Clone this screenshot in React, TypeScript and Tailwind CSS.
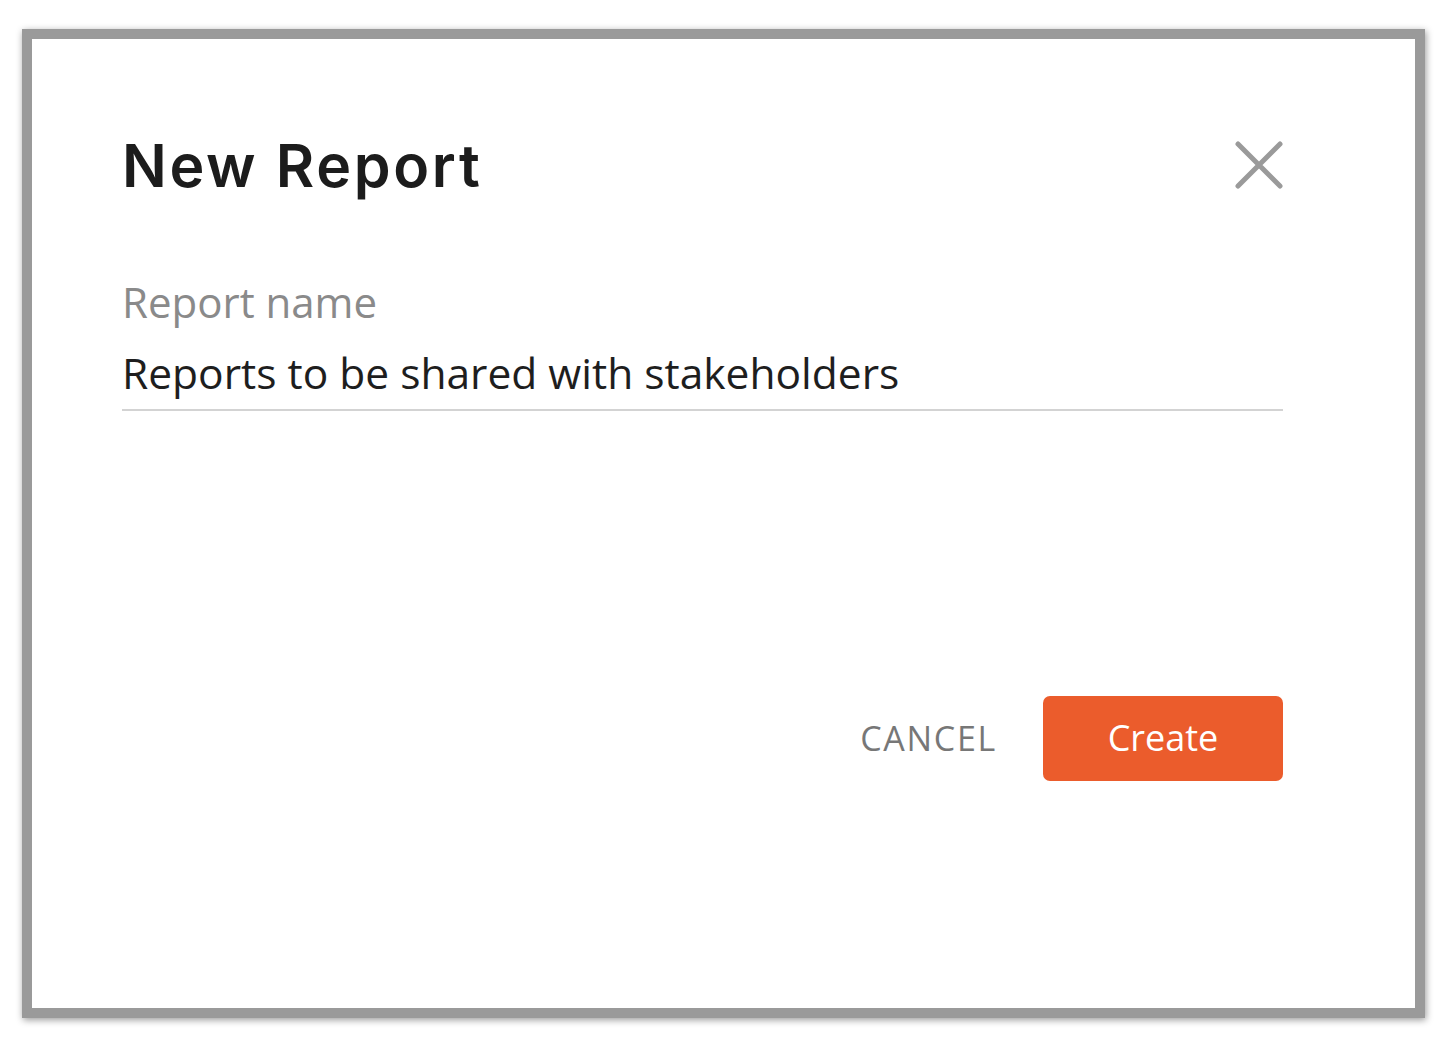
import React from 'react';

const CloseIcon: React.FC = () => (
  <svg width="50" height="50" viewBox="0 0 50 50" fill="none">
    <path d="M4 4 L46 46 M46 4 L4 46" stroke="#9a9a9a" strokeWidth="5" strokeLinecap="round" />
  </svg>
);

export default function App() {
  return (
    <div className="w-[1442px] h-[1042px] bg-white pt-[29px] pl-[22px]">
      <div className="w-[1403px] h-[989px] border-[10px] border-[#9a9a9a] bg-white shadow-[1px_2px_7px_rgba(0,0,0,0.4)] flex flex-col pl-[90px] pr-[132px] pt-[97px]">
        {/* Header */}
        <div className="flex items-center justify-between">
          <h1 className="text-[59px] leading-none font-semibold text-[#1c1c1c] font-['Inter',sans-serif] tracking-[0.045em]">
            New Report
          </h1>
          <button className="mr-[-1px] mt-[-2px]">
            <CloseIcon />
          </button>
        </div>

        {/* Field */}
        <div className="mt-[86px] font-['Open_Sans',sans-serif]">
          <div className="text-[42px] leading-none text-[#8a8a8a]">Report name</div>
          <div className="mt-[29px] pb-[14px] border-b-2 border-[#d3d3d3] text-[42.5px] leading-none text-[#1e1e1e]">
            Reports to be shared with stakeholders
          </div>
        </div>

        {/* Actions */}
        <div className="mt-[285px] flex items-center justify-end gap-[46px] font-['Open_Sans',sans-serif]">
          <button className="text-[34px] font-medium tracking-[0.05em] text-[#777777]">CANCEL</button>
          <button className="w-[240px] h-[85px] rounded-[7px] bg-[#eb5c2c] text-[36px] font-medium text-white">
            Create
          </button>
        </div>
      </div>
    </div>
  );
}
